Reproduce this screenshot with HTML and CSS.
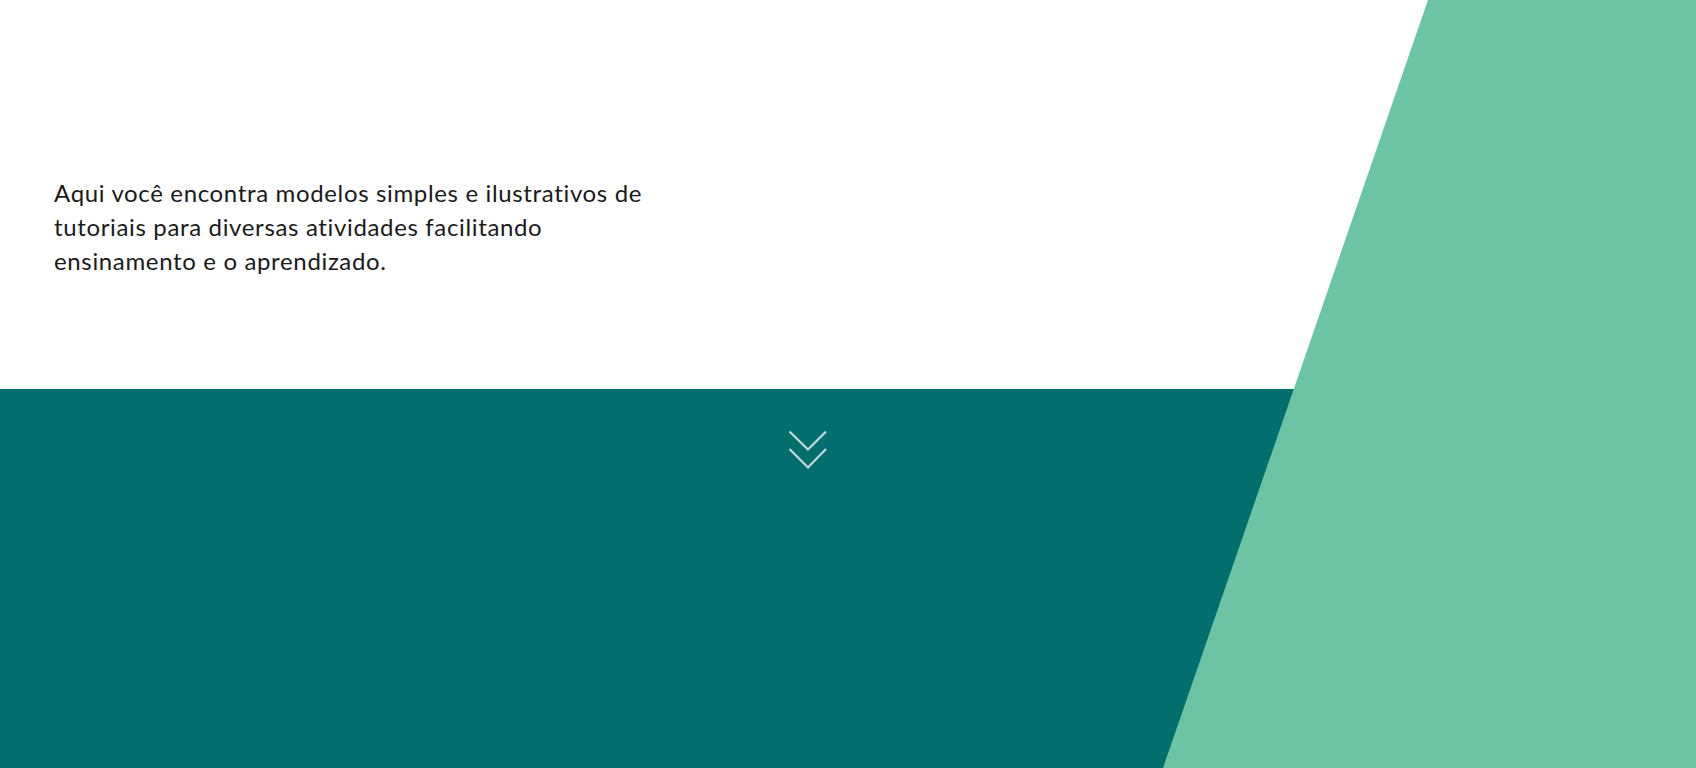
FILE: index.html
```html
<!DOCTYPE html>
<html lang="pt">
<head>
<meta charset="utf-8">
<title>Tutoriais</title>
<link rel="stylesheet" href="styles.css">
</head>
<body>
<div class="page">
  <section class="hero">
    <p class="intro">Aqui você encontra modelos simples e ilustrativos de tutoriais para diversas atividades facilitando ensinamento e o aprendizado.</p>
  </section>
  <section class="band">
    <svg class="chevrons" width="40" height="40" viewBox="0 0 40 40" aria-hidden="true">
      <polyline points="1.5,1.5 20,19.5 38,1.5" fill="none" stroke="#c4d9dc" stroke-width="2.2"/>
      <polyline points="1.5,19 20,37.5 38,19" fill="none" stroke="#c4d9dc" stroke-width="2.2"/>
    </svg>
  </section>
  <div class="slant"></div>
</div>
</body>
</html>
```

FILE: styles.css
```css
html, body {
  margin: 0;
  padding: 0;
}
body {
  font-family: "Lato", "Open Sans", sans-serif;
  color: #1a1a1a;
  background: #fff;
  overflow: hidden;
}
.page {
  position: relative;
  width: 1696px;
  height: 768px;
  overflow: hidden;
  display: flex;
  flex-direction: column;
}
.hero {
  height: 389px;
  background: #fff;
  padding: 176px 0 0 54px;
  box-sizing: border-box;
}
.intro {
  margin: 0;
  max-width: 605px;
  font-size: 24px;
  line-height: 34px;
  font-weight: 400;
  letter-spacing: 0.65px;
}
.band {
  flex: 1;
  background: #006f6d;
  display: flex;
  justify-content: center;
  padding: 0 80px 0 0;
  box-sizing: border-box;
}
.chevrons {
  margin-top: 41px;
}
.slant {
  position: absolute;
  top: 0;
  right: 0;
  width: 533px;
  height: 768px;
  background: #6bc5a4;
  clip-path: polygon(265px 0, 100% 0, 100% 100%, 0 100%);
}
```
